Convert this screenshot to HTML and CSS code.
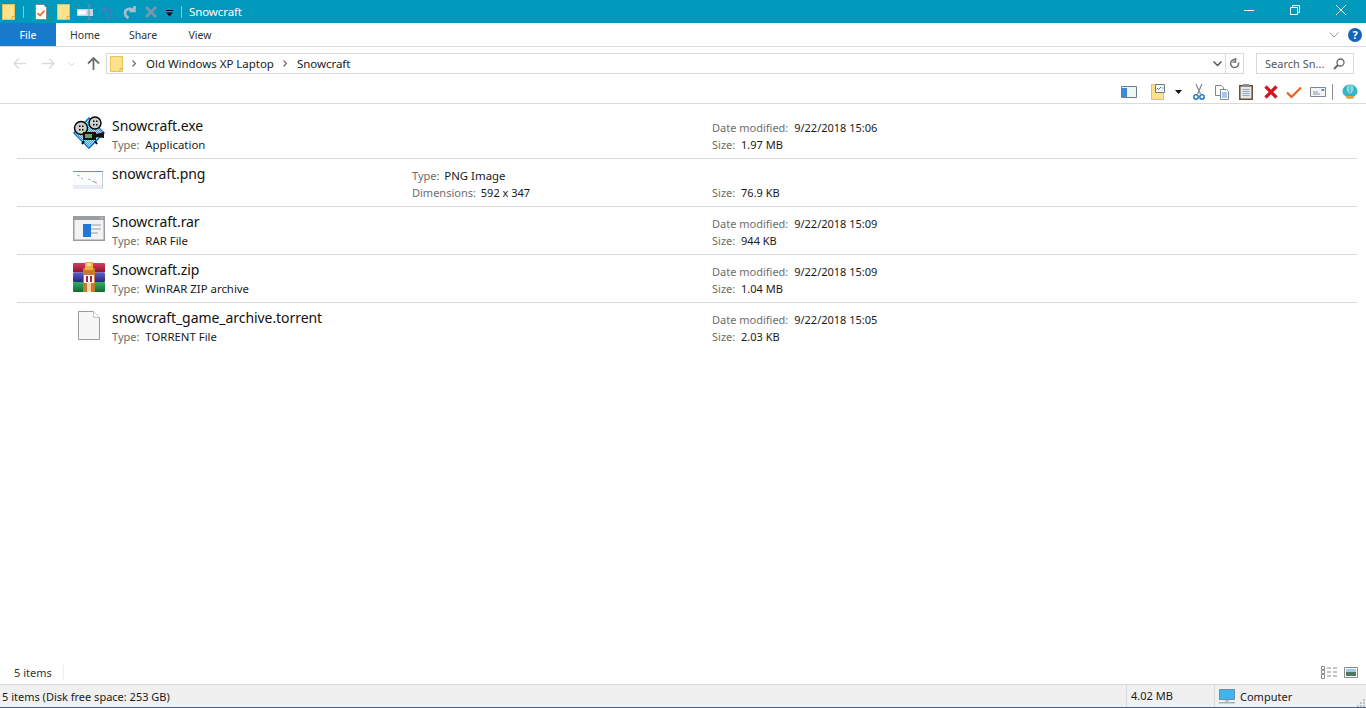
FILE: index.html
```html
<!DOCTYPE html>
<html lang="en">
<head>
  <meta charset="utf-8">
  <title>Snowcraft</title>
  <link rel="stylesheet" href="styles.css">
</head>
<body>
  <header class="titlebar">
    <div class="qat">
      <svg width="13" height="16" viewBox="0 0 13 16"><path d="M.5.500h12v15H.5z" fill="#fde28b" stroke="#e3c35c"/><path d="M10 15.500v-3h2.500" fill="none" stroke="#d9b040"/></svg>
      <span class="qat-sep"></span>
      <svg class="qat-doc" width="12" height="16" viewBox="0 0 12 16"><path d="M.5.500h8l3 3v12H.5z" fill="#fff" stroke="#8a8a8a"/><path d="M2.500 9l2.500 2.500 4.500-5" fill="none" stroke="#e8662a" stroke-width="1.600"/></svg>
      <svg class="qat-folder2" width="13" height="16" viewBox="0 0 13 16"><path d="M.5.500h12v15H.5z" fill="#fde28b" stroke="#e3c35c"/><path d="M10 15.500v-3h2.500" fill="none" stroke="#d9b040"/></svg>
      <svg class="qat-rename" width="16" height="16" viewBox="0 0 16 16"><path d="M0 5h16v7H0z" fill="#c9d3e6"/><path d="M1 6.500h8v4H1z" fill="#fff"/><path d="M10 1h4M12 1v14M10 15h4" stroke="#7d8fa3" fill="none"/></svg>
      <svg class="qat-undo" width="13" height="14" viewBox="0 0 13 14"><path d="M2 1v4.500h4.500M2.200 5.400c3-3 8.800-1.800 8.800 2.600 0 2.600-2 4.500-4.500 5" fill="none" stroke="#3f7fc4" stroke-width="1.800"/></svg>
      <svg class="qat-redo" width="13" height="14" viewBox="0 0 13 14"><path d="M11.500 1v5H6.500M11 5.600C8 2.500 2 3.500 2 8c0 2.500 1.500 4 3.500 5" fill="none" stroke="#a9bccb" stroke-width="2.600"/></svg>
      <svg class="qat-x" width="12" height="12" viewBox="0 0 12 12"><path d="M1 1l10 10M11 1L1 11" stroke="#7e96ac" stroke-width="2.500"/></svg>
      <svg class="qat-more" width="8" height="7" viewBox="0 0 8 7"><path d="M0 0h7v1H0zM0 2.500h7L3.500 6.500z" fill="#111"/></svg>
      <span class="qat-sep qat-sep-end"></span>
    </div>
    <span class="title-text">Snowcraft</span>
    <div class="winbtns">
      <svg width="10" height="10" viewBox="0 0 10 10"><path d="M0 5.500h10" stroke="#fff"/></svg>
      <svg width="10" height="10" viewBox="0 0 10 10"><path d="M.5 2.500h7v7h-7zM2.500 2.500v-2h7v7h-2" fill="none" stroke="#fff"/></svg>
      <svg width="10" height="10" viewBox="0 0 10 10"><path d="M0 0l10 10M10 0L0 10" stroke="#fff"/></svg>
    </div>
  </header>

  <nav class="tabs">
    <a class="tab tab-file">File</a>
    <a class="tab">Home</a>
    <a class="tab">Share</a>
    <a class="tab tab-view">View</a>
    <div class="tabs-right">
      <svg width="10" height="6" viewBox="0 0 10 6"><path d="M.5.500L5 5 9.500.500" fill="none" stroke="#9a9a9a"/></svg>
      <svg width="14" height="14" viewBox="0 0 14 14"><circle cx="7" cy="7" r="7" fill="#1564b8"/><text x="7" y="11" class="help-q">?</text></svg>
    </div>
  </nav>

  <section class="addressrow">
    <svg class="nav-back" width="13" height="11" viewBox="0 0 13 11"><path d="M6 .500L1 5.500l5 5M1 5.500h12" fill="none" stroke="#dcdcdc" stroke-width="1.500"/></svg>
    <svg class="nav-fwd" width="13" height="11" viewBox="0 0 13 11"><path d="M7 .500l5 5-5 5M12 5.500H0" fill="none" stroke="#dcdcdc" stroke-width="1.500"/></svg>
    <svg class="nav-chev" width="7" height="4" viewBox="0 0 7 4"><path d="M.5.500l3 3 3-3" fill="none" stroke="#d4d4d4"/></svg>
    <svg width="13" height="13" viewBox="0 0 13 13"><path d="M1 6.500l5.500-5.500 5.500 5.500M6.500 1v12" fill="none" stroke="#6f6f6f" stroke-width="1.800"/></svg>
    <div class="addressbox">
      <svg class="addr-folder" width="13" height="16" viewBox="0 0 13 16"><path d="M.5.500h12v15H.5z" fill="#fde28b" stroke="#e3c35c"/><path d="M10 15.500v-3h2.500" fill="none" stroke="#d9b040"/></svg>
      <svg class="crumb-arrow" width="4" height="7" viewBox="0 0 4 7"><path d="M.5.500l3 3-3 3" fill="none" stroke="#666" stroke-width="1.200"/></svg>
      <span class="crumb">Old Windows XP Laptop</span>
      <svg class="crumb-arrow" width="4" height="7" viewBox="0 0 4 7"><path d="M.5.500l3 3-3 3" fill="none" stroke="#666" stroke-width="1.200"/></svg>
      <span class="crumb">Snowcraft</span>
      <svg class="addr-drop" width="9" height="6" viewBox="0 0 9 6"><path d="M.5.500l4 4 4-4" fill="none" stroke="#555" stroke-width="1.500"/></svg>
      <span class="addr-refresh">
        <svg width="11" height="13" viewBox="0 0 11 13"><path d="M6.500 1.500h-2A4 4 0 1 0 9 4.500M6 0v4H3" fill="none" stroke="#6f6f6f" stroke-width="1.500" transform="translate(.5 1)"/></svg>
      </span>
    </div>
    <div class="searchbox">
      <span>Search Sn...</span>
      <svg width="12" height="12" viewBox="0 0 12 12"><circle cx="7.500" cy="4.500" r="3.500" fill="none" stroke="#666" stroke-width="1.300"/><path d="M5 7L1 11" stroke="#666" stroke-width="2"/></svg>
    </div>
  </section>

  <section class="toolbar">
    <svg width="16" height="12" viewBox="0 0 16 12"><path d="M.5.500h15v11H.5z" fill="#f1f3f5" stroke="#6d7b87"/><path d="M1 2h5v9H1z" fill="#3d8ad6"/></svg>
    <svg class="tb-views" width="14" height="16" viewBox="0 0 14 16"><path d="M.5.500h12v15H.5z" fill="#fde28b" stroke="#e3c35c"/><path d="M4.500.500h9v8h-9z" fill="#f4f6f8" stroke="#6d7b87"/><path d="M6 4l1.500 1.500L10 3" fill="none" stroke="#3877c5"/><path d="M11 4h2" stroke="#9aa7b5"/></svg>
    <svg class="tb-drop" width="7" height="4" viewBox="0 0 7 4"><path d="M0 0h7L3.500 4z" fill="#111"/></svg>
    <svg class="tb-cut" width="12" height="16" viewBox="0 0 12 16"><path d="M3 0l4.500 10M9 0L4.500 10" stroke="#8b8f94" stroke-width="1.300"/><circle cx="3" cy="13" r="2.200" fill="none" stroke="#1f7bcf" stroke-width="1.500"/><circle cx="9" cy="13" r="2.200" fill="none" stroke="#1f7bcf" stroke-width="1.500"/></svg>
    <svg class="tb-copy" width="14" height="15" viewBox="0 0 14 15"><path d="M.5.500h6l2 2v8H.5z" fill="#fff" stroke="#7d8791"/><path d="M5.500 4.500h6l2 2v8h-8z" fill="#fff" stroke="#7d8791"/><path d="M7 8h5M7 10h5M7 12h5" stroke="#4a8fd6"/></svg>
    <svg class="tb-paste" width="14" height="16" viewBox="0 0 14 16"><path d="M.8 1.800h12.400v13.400H.8z" fill="#efe9de" stroke="#6b4a2e" stroke-width="1.500"/><path d="M2.500 3.500h9v10h-9z" fill="#dfe7ef"/><path d="M3.500 5.500h7M3.500 7.500h7M3.500 9.500h7M3.500 11.500h7" stroke="#9aa7b5"/><path d="M4 0h6v3H4z" fill="#8a8f95"/></svg>
    <svg class="tb-del" width="14" height="14" viewBox="0 0 14 14"><path d="M1.500 1.500l11 11M12.500 1.500l-11 11" stroke="#d5131f" stroke-width="3.200"/></svg>
    <svg class="tb-check" width="16" height="12" viewBox="0 0 16 12"><path d="M1 6.500l4.500 4.500L15 1.500" fill="none" stroke="#ea5f1e" stroke-width="2.200"/></svg>
    <svg class="tb-mail" width="16" height="10" viewBox="0 0 16 10"><path d="M.5.500h15v9H.5z" fill="#f3f4f6" stroke="#7d8791"/><path d="M3 5h5M3 7h7" stroke="#8c97a2"/><path d="M11.500 2h2.500v2h-2.500z" fill="#3d8ad6"/></svg>
    <span class="tb-sep"></span>
    <svg class="tb-shell" width="16" height="16" viewBox="0 0 16 16"><path d="M8 .500c4 0 7.500 2.800 7.500 7 0 2-1.200 3.500-3 4.500l-1.500 2.500H5L3.500 12C1.700 11 .500 9.500.500 7.500c0-4.200 3.500-7 7.500-7z" fill="#35b6c9"/><path d="M5 2c2-1 4-1 6 0l1 5-4 4-4-4z" fill="#86dbe2"/><path d="M8 13V2M8 13L3 4M8 13l5-9" stroke="#2a9fb4" stroke-width=".7"/><path d="M3.500 12H12.500L11 14.500H5z" fill="#e8a23c"/></svg>
  </section>

  <main class="filelist">
    <article class="filerow">
      <svg class="file-icon icon-exe" width="32" height="33" viewBox="0 0 32 33">
        <defs>
          <pattern id="dither" width="2" height="2" patternUnits="userSpaceOnUse">
            <path d="M0 0h2v2H0z" fill="#a5e8fb"/><path d="M0 0h1v1H0zM1 1h1v1H1z" fill="#1fb4ee"/>
          </pattern>
        </defs>
        <path d="M16 32.200L.8 17 16 1.800 31.200 17z" fill="url(#dither)" stroke="#1268c8" stroke-width="1.300"/>
        <circle cx="8" cy="12" r="6.500" fill="#cfcfcf" stroke="#000" stroke-width="1.400"/>
        <circle cx="22" cy="7" r="6" fill="#cfcfcf" stroke="#000" stroke-width="1.400"/>
        <path d="M6 9.500h1.500v1.500H6zM9 9.500h1.500v1.500H9zM6 13h1.500v1.500H6zM9 13h1.500v1.500H9zM20 4.500h1.500V6H20zM23 4.500h1.500V6H23zM20 8h1.500v1.500H20zM23 8h1.500v1.500H23z" fill="#000"/>
        <path d="M10 16h13v8H10zM23 18l8-2v6l-8-1z" fill="#111"/>
        <path d="M12 18h7v4h-7z" fill="#66a66e"/>
        <path d="M11 25l-2 3M22 25l2 3" stroke="#000" stroke-width="2"/>
      </svg>
      <div class="cell-main">
        <div class="fname">Snowcraft.exe</div>
        <div class="prop"><span class="lbl">Type:</span> <span class="val">Application</span></div>
      </div>
      <div class="cell-mid"></div>
      <div class="cell-meta">
        <div class="prop"><span class="lbl">Date modified:</span> 9/22/2018 15:06</div>
        <div class="prop"><span class="lbl">Size:</span> 1.97 MB</div>
      </div>
    </article>

    <article class="filerow">
      <svg class="file-icon icon-png" width="30" height="18" viewBox="0 0 30 18">
        <path d="M0 0h30v18H0z" fill="#fbfcfe"/>
        <path d="M0 0h30v1H0z" fill="#5c93d8"/>
        <path d="M29 1h1v17h-1z" fill="#c9ced6"/>
        <path d="M0 14h29v4H0z" fill="#e6ebf5"/>
        <path d="M4 4l3 1M8 7l2 1M15 8l3 1M19 10l3 1" stroke="#a9bcae"/>
        <path d="M21 11l3 1" stroke="#d7878a"/>
      </svg>
      <div class="cell-main">
        <div class="fname">snowcraft.png</div>
      </div>
      <div class="cell-mid">
        <div class="prop"><span class="lbl">Type:</span> <span class="val">PNG Image</span></div>
        <div class="prop"><span class="lbl">Dimensions:</span> 592 x 347</div>
      </div>
      <div class="cell-meta cell-bottom">
        <div class="prop"><span class="lbl">Size:</span> 76.9 KB</div>
      </div>
    </article>

    <article class="filerow">
      <svg class="file-icon icon-rar" width="32" height="25" viewBox="0 0 32 25">
        <path d="M0 0h32v25H0z" fill="#9a9da1"/>
        <path d="M1.500 4h29v19.500h-29z" fill="#f3f3f3"/>
        <path d="M27 1h3v2h-3z" fill="#b4b6b9"/>
        <path d="M10 8h8v13H10z" fill="#1f78d8"/>
        <path d="M18 8h10v2H18zM18 12h10v2H18zM18 16h7v2H18z" fill="#c4c8cd"/>
      </svg>
      <div class="cell-main">
        <div class="fname">Snowcraft.rar</div>
        <div class="prop"><span class="lbl">Type:</span> <span class="val">RAR File</span></div>
      </div>
      <div class="cell-mid"></div>
      <div class="cell-meta">
        <div class="prop"><span class="lbl">Date modified:</span> 9/22/2018 15:09</div>
        <div class="prop"><span class="lbl">Size:</span> 944 KB</div>
      </div>
    </article>

    <article class="filerow">
      <svg class="file-icon icon-zip" width="32" height="30" viewBox="0 0 32 30">
        <defs>
          <linearGradient id="bookRed" x1="0" y1="0" x2="0" y2="1"><stop offset="0" stop-color="#d83c5e"/><stop offset="1" stop-color="#8a1230"/></linearGradient>
          <linearGradient id="bookBlue" x1="0" y1="0" x2="0" y2="1"><stop offset="0" stop-color="#5a60c8"/><stop offset="1" stop-color="#24297a"/></linearGradient>
          <linearGradient id="bookGreen" x1="0" y1="0" x2="0" y2="1"><stop offset="0" stop-color="#38ad62"/><stop offset="1" stop-color="#0f6a32"/></linearGradient>
        </defs>
        <rect x="0" y="1" width="32" height="9.500" rx="1" fill="url(#bookRed)"/>
        <rect x="0" y="10.500" width="32" height="9.500" rx="1" fill="url(#bookBlue)"/>
        <rect x="0" y="20" width="32" height="10" rx="1" fill="url(#bookGreen)"/>
        <path d="M10 6h12v24H10z" fill="#c9792f"/>
        <path d="M12 0h8v8h-8z" fill="#eab53c"/>
        <path d="M14 1h4v3h-4z" fill="#fff" fill-opacity=".5"/>
        <path d="M11 13h10v8H11z" fill="#fff"/>
        <path d="M13 14h2v6h-2zM17 14h2v6h-2z" fill="#b3203f"/>
        <path d="M14 21h4v9h-4z" fill="#f0d9a8"/>
      </svg>
      <div class="cell-main">
        <div class="fname">Snowcraft.zip</div>
        <div class="prop"><span class="lbl">Type:</span> <span class="val">WinRAR ZIP archive</span></div>
      </div>
      <div class="cell-mid"></div>
      <div class="cell-meta">
        <div class="prop"><span class="lbl">Date modified:</span> 9/22/2018 15:09</div>
        <div class="prop"><span class="lbl">Size:</span> 1.04 MB</div>
      </div>
    </article>

    <article class="filerow">
      <svg class="file-icon icon-blank" width="22" height="29" viewBox="0 0 22 29">
        <path d="M.5.500h15l6 6v22H.5z" fill="#f7f7f7" stroke="#9a9a9a"/>
        <path d="M15.500.500v6h6" fill="#fff" stroke="#c4c4c4"/>
      </svg>
      <div class="cell-main">
        <div class="fname">snowcraft_game_archive.torrent</div>
        <div class="prop"><span class="lbl">Type:</span> <span class="val">TORRENT File</span></div>
      </div>
      <div class="cell-mid"></div>
      <div class="cell-meta">
        <div class="prop"><span class="lbl">Date modified:</span> 9/22/2018 15:05</div>
        <div class="prop"><span class="lbl">Size:</span> 2.03 KB</div>
      </div>
    </article>
  </main>

  <div class="countbar">
    <span class="count">5 items</span>
    <div class="viewbtns">
      <svg width="16" height="13" viewBox="0 0 16 13"><path d="M.5.500h3v3h-3zM.5 4.500h3v3h-3zM.5 8.500h3v4h-3z" fill="none" stroke="#8a8a8a"/><path d="M6 2h4M12 2h4M6 6h4M12 6h4M6 10h4M12 10h4" stroke="#8a8a8a"/></svg>
      <svg width="14" height="11" viewBox="0 0 14 11"><path d="M.5.500h13v10H.5z" fill="#fff" stroke="#8a8a8a"/><path d="M2 2h10v3H2z" fill="#9ccbe8"/><path d="M2 5h10v4H2z" fill="#4f7a62"/></svg>
    </div>
  </div>

  <footer class="statusbar">
    <span class="status-main">5 items (Disk free space: 253 GB)</span>
    <span class="status-size">4.02 MB</span>
    <span class="status-zone">
      <svg width="16" height="15" viewBox="0 0 16 15"><path d="M.5.500h15v10H.5z" fill="#3fb4ee" stroke="#6d8ea3"/><path d="M6 11h4v2H6z" fill="#bcc8d2"/><path d="M0 13h16v1.500H0z" fill="#a7b4bf"/></svg>
      Computer
    </span>
    <svg class="grip" width="9" height="9" viewBox="0 0 9 9"><path d="M7 1h2v2H7zM4 4h2v2H4zM7 4h2v2H7zM1 7h2v2H1zM4 7h2v2H4zM7 7h2v2H7z" fill="#c4c4c4"/></svg>
  </footer>
</body>
</html>
```

FILE: styles.css
```css
html, body {
  height: 100%;
  margin: 0;
}
body {
  display: flex;
  flex-direction: column;
  background: #fff;
  color: #1a1a1a;
  font-family: "Noto Sans", "Open Sans", sans-serif;
  font-size: 11px;
  overflow: hidden;
}
svg {
  display: block;
  flex: none;
}

/* title bar */
.titlebar {
  display: flex;
  align-items: center;
  height: 23px;
  background: #0099bc;
  color: #fff;
  flex: none;
}
.qat {
  display: flex;
  align-items: center;
  padding-left: 2px;
}
.qat-sep {
  width: 1px;
  height: 12px;
  background: #7cc8d9;
  margin-left: 8px;
}
.qat-sep-end { margin-left: 7px; }
.qat-doc { margin-left: 11px; }
.qat-folder2 { margin-left: 10px; }
.qat-rename { margin-left: 7px; }
.qat-undo { margin-left: 7px; }
.qat-redo { margin-left: 10px; }
.qat-x { margin-left: 9px; }
.qat-more { margin: 3px 0 0 9px; }
.title-text {
  margin-left: 7px;
  font-size: 11.500px;
  letter-spacing: -0.100px;
}
.winbtns {
  display: flex;
  align-items: center;
  gap: 36px;
  margin-left: auto;
  padding-right: 20px;
  margin-top: -4px;
}

/* ribbon tabs */
.tabs {
  display: flex;
  align-items: stretch;
  height: 23px;
  border-bottom: 1px solid #dadbdc;
  flex: none;
  color: #333;
}
.tab {
  display: flex;
  align-items: center;
  justify-content: center;
  width: 58px;
  font-size: 10.500px;
}
.tab-file {
  width: 56px;
  background: #1979ca;
  color: #fff;
}
.tab-view { width: 56px; }
.tabs-right {
  display: flex;
  align-items: center;
  gap: 9px;
  margin-left: auto;
  padding-right: 4px;
}
.help-q {
  fill: #fff;
  font-size: 11px;
  font-weight: 700;
  text-anchor: middle;
}

/* address row */
.addressrow {
  display: flex;
  align-items: center;
  height: 33px;
  flex: none;
  padding-left: 13px;
}
.nav-back { margin-right: 16px; }
.nav-fwd { margin-right: 13px; }
.nav-chev { margin-right: 12px; }
.addressbox {
  display: flex;
  align-items: center;
  width: 1138px;
  height: 21px;
  box-sizing: border-box;
  margin-left: 6px;
  border: 1px solid #d9d9d9;
  font-size: 11.500px;
}
.addr-folder { margin-left: 3px; }
.crumb-arrow { margin-left: 9px; }
.crumb { margin-left: 10px; letter-spacing: -0.030px; }
.addr-drop {
  margin-left: auto;
  margin-right: 3px;
}
.addr-refresh {
  display: flex;
  align-items: center;
  justify-content: center;
  width: 17px;
  height: 100%;
  border-left: 1px solid #d9d9d9;
}
.searchbox {
  display: flex;
  align-items: center;
  justify-content: space-between;
  width: 98px;
  height: 21px;
  box-sizing: border-box;
  margin-left: 12px;
  padding: 0 8px;
  border: 1px solid #d9d9d9;
  color: #555;
  font-size: 11px;
}

/* command toolbar */
.toolbar {
  display: flex;
  align-items: center;
  justify-content: flex-end;
  height: 22px;
  flex: none;
  padding: 1px 8px 0 0;
  border-bottom: 1px solid #dadbdc;
}
.tb-views { margin-left: 14px; }
.tb-drop { margin-left: 10px; }
.tb-cut { margin-left: 11px; }
.tb-copy { margin-left: 10px; }
.tb-paste { margin-left: 10px; }
.tb-del { margin-left: 11px; }
.tb-check { margin-left: 8px; }
.tb-mail { margin-left: 8px; }
.tb-shell { margin-left: 9px; }
.tb-sep {
  width: 1px;
  height: 16px;
  margin-left: 6px;
  background: #8f8f8f;
}

/* file list */
.filelist {
  flex: 1;
  padding: 7px 9px 0 17px;
}
.filerow {
  display: grid;
  grid-template-columns: 95px 300px 300px 1fr;
  height: 47px;
  border-bottom: 1px solid #d9d9d9;
}
.filerow:last-child {
  border-bottom: none;
}
.file-icon {
  justify-self: start;
  margin-left: 56px;
}
.icon-exe { margin-top: 5px; }
.icon-png { margin-top: 12px; }
.icon-rar { margin-top: 9px; }
.icon-zip { margin-top: 7px; }
.icon-blank { margin: 8px 0 0 61px; }
.fname {
  margin-top: 5px;
  height: 20px;
  line-height: 20px;
  font-size: 14px;
  letter-spacing: -0.060px;
  color: #111;
}
.prop {
  height: 17px;
  line-height: 17px;
  white-space: nowrap;
}
.lbl {
  color: #6d6d6d;
  margin-right: 3px;
}
.val {
  font-size: 11.400px;
}
.cell-mid { padding-top: 8px; }
.cell-mid .lbl { margin-right: 2px; }
.cell-meta { padding-top: 8px; }
.cell-meta.cell-bottom { padding-top: 25px; }

/* bottom bars */
.countbar {
  display: flex;
  align-items: center;
  justify-content: space-between;
  height: 23px;
  flex: none;
  padding: 0 3px 0 14px;
  color: #333;
}
.count {
  padding-right: 11px;
  border-right: 1px solid #eee;
}
.viewbtns {
  display: flex;
  align-items: center;
  gap: 7px;
  padding-right: 5px;
}
.statusbar {
  display: flex;
  align-items: center;
  height: 22px;
  flex: none;
  background: #f0f0f0;
  border-top: 1px solid #d9d9d9;
  border-bottom: 1px solid #2b65b5;
}
.status-main {
  width: 1126px;
  padding-left: 2px;
  box-sizing: border-box;
}
.status-size {
  width: 88px;
  height: 100%;
  line-height: 22px;
  padding-left: 4px;
  box-sizing: border-box;
  border-left: 1px solid #d9d9d9;
}
.status-zone {
  display: flex;
  align-items: center;
  gap: 5px;
  height: 100%;
  padding-left: 4px;
  border-left: 1px solid #d9d9d9;
}
.grip {
  margin: auto 1px 0 auto;
}
```
